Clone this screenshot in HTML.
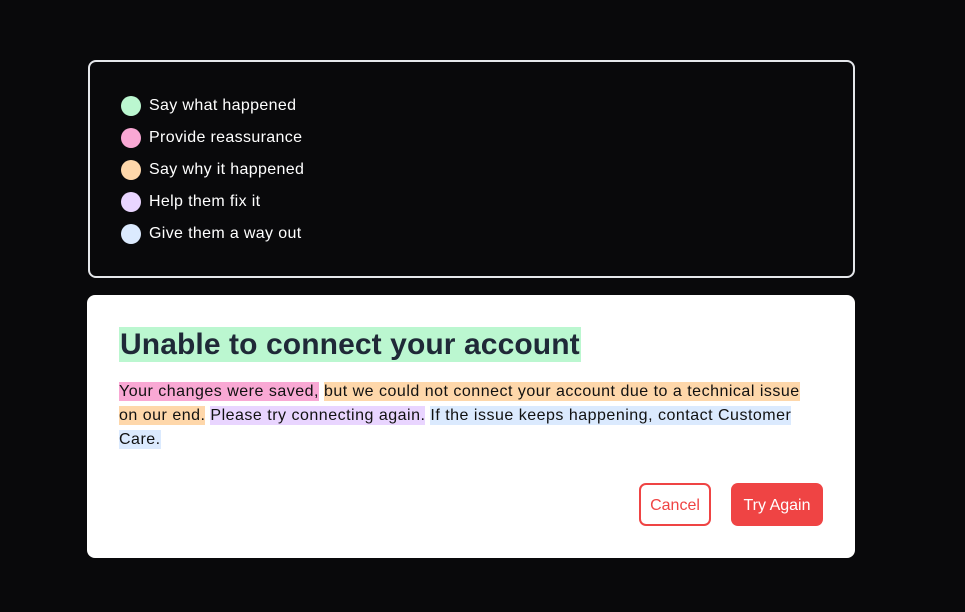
<!DOCTYPE html>
<html><head><style>
html,body{margin:0;padding:0;background:#09090b;width:965px;height:612px;overflow:hidden;font-family:"Liberation Sans",sans-serif}
.top{position:absolute;left:88px;top:60px;width:763px;height:214px;border:2px solid #e5e7eb;border-radius:8px;box-sizing:content-box}
.item{position:absolute;left:31px;height:20px;display:flex;align-items:center;color:#fff;font-size:16px;letter-spacing:0.35px}
.dot{width:20px;height:20px;border-radius:50%;margin-right:8px}
.card{position:absolute;left:87px;top:295px;width:768px;height:263px;background:#fff;border-radius:8px}
h1{position:absolute;left:32px;top:32px;margin:0;font-size:30px;line-height:35px;font-weight:bold;color:#1f2937;background:#bbf7d0;padding:0 1px;letter-spacing:0.1px}
.p{position:absolute;left:32px;top:85px;width:720px;font-size:16px;line-height:24px;color:#111;letter-spacing:0.5px}
.p span{padding:1px 0}
.b{position:absolute;top:188px;height:43px;border-radius:7px;font-size:16px;display:flex;align-items:center;justify-content:center;box-sizing:border-box;padding-top:2px}
</style></head><body>
<div class="top">
<div class="item" style="top:34px"><div class="dot" style="background:#bbf7d0"></div>Say what happened</div>
<div class="item" style="top:66px"><div class="dot" style="background:#f9a8d4"></div>Provide reassurance</div>
<div class="item" style="top:98px"><div class="dot" style="background:#fed7aa"></div>Say why it happened</div>
<div class="item" style="top:130px"><div class="dot" style="background:#e9d5ff"></div>Help them fix it</div>
<div class="item" style="top:162px"><div class="dot" style="background:#dbeafe"></div>Give them a way out</div>
</div>
<div class="card">
<h1>Unable to connect your account</h1>
<div class="p"><span style="background:#f9a8d4">Your changes were saved,</span> <span style="background:#fed7aa">but we could not connect your account due to a technical issue<br>on our end.</span> <span style="background:#e9d5ff">Please try connecting again.</span> <span style="background:#dbeafe">If the issue keeps happening, contact Customer<br>Care.</span></div>
<div class="b" style="left:552px;width:72px;border:2px solid #ef4444;color:#ef4444">Cancel</div>
<div class="b" style="left:644px;width:92px;background:#ef4444;color:#fff">Try Again</div>
</div>
</body></html>
